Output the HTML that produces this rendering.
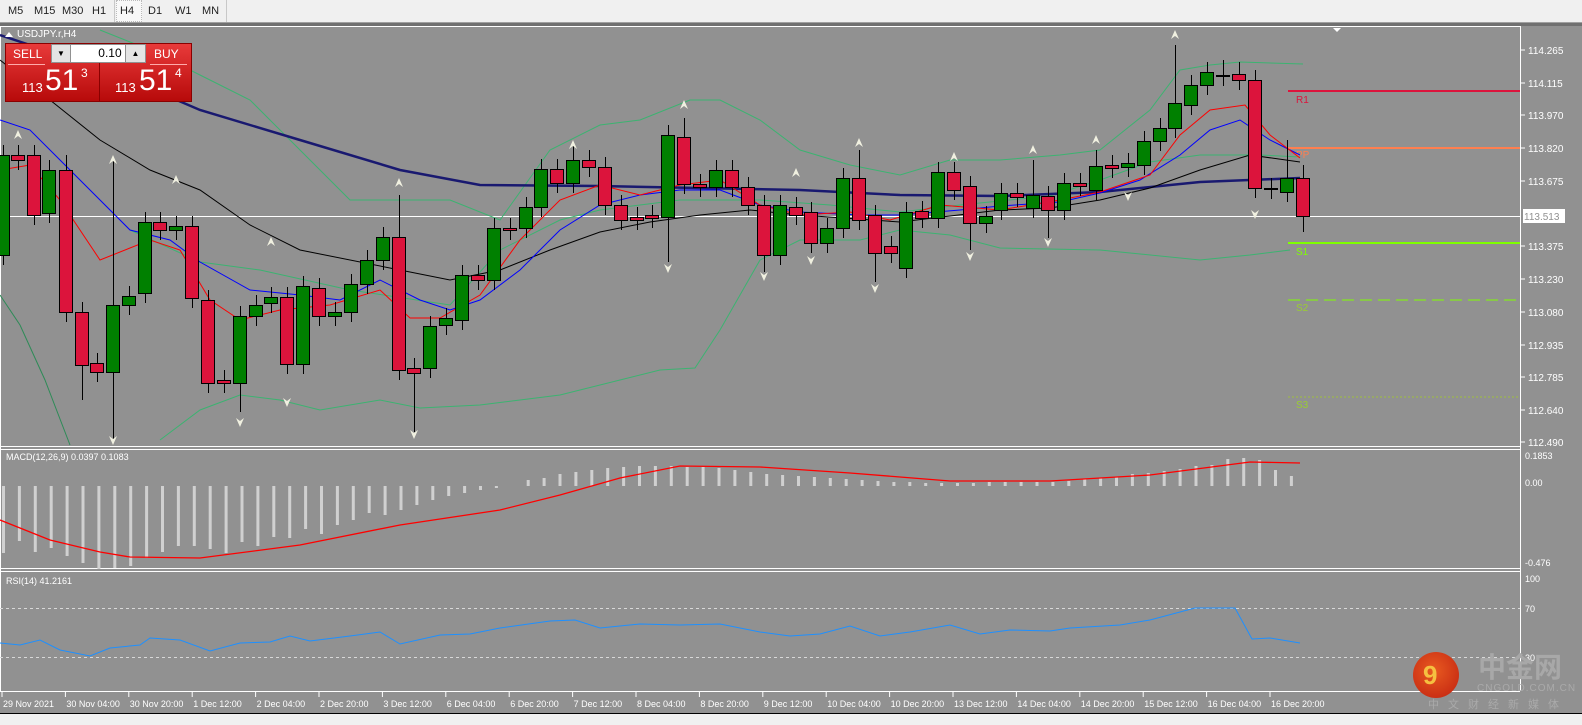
<!DOCTYPE html>
<html><head><meta charset="utf-8"><style>
html,body{margin:0;padding:0;width:1582px;height:724px;overflow:hidden;background:#919191;font-family:"Liberation Sans",sans-serif}
#tb{position:absolute;left:0;top:0;width:1582px;height:22px;background:#f0f0f0;border-bottom:1px solid #a0a0a0}
#tb span{position:absolute;top:5px;font-size:11px;color:#222}
.sep{position:absolute;top:0;width:1px;height:22px;background:#c8c8c8}
#bot{position:absolute;left:0;top:713px;width:1582px;height:11px;background:#f0f0f0;border-top:1px solid #000}
</style></head><body>
<div id="tb">
<span style="left:8px">M5</span><span style="left:34px">M15</span><span style="left:62px">M30</span><span style="left:92px">H1</span>
<div class="sep" style="left:114px"></div>
<div style="position:absolute;left:116px;top:0;width:24px;height:20px;background:#f8f8f8;border:1px dotted #bbb"></div>
<span style="left:120px">H4</span><span style="left:148px">D1</span><span style="left:175px">W1</span><span style="left:202px">MN</span>
<div class="sep" style="left:226px"></div>
</div>
<svg id="s" width="1582" height="724" style="position:absolute;left:0;top:0" xmlns="http://www.w3.org/2000/svg"></svg>
<div style="position:absolute;left:5px;top:43px;width:93px;height:57px;background:linear-gradient(#e83a3a,#b70a0a);border:1px solid #8a0000"></div>
<div style="position:absolute;left:99px;top:43px;width:91px;height:57px;background:linear-gradient(#e83a3a,#b70a0a);border:1px solid #8a0000"></div>
<div style="position:absolute;left:51px;top:44px;width:95px;height:19px;background:#919191"></div>
<div style="position:absolute;left:52px;top:45px;width:18px;height:17px;background:#e4e4e4;font-size:8px;text-align:center;line-height:17px">▼</div>
<div style="position:absolute;left:71px;top:45px;width:54px;height:17px;background:#fff;font-size:12px;text-align:right;line-height:17px">0.10&nbsp;</div>
<div style="position:absolute;left:126px;top:45px;width:19px;height:17px;background:#e4e4e4;font-size:8px;text-align:center;line-height:17px">▲</div>
<div style="position:absolute;left:13px;top:47px;color:#fff;font-size:12px">SELL</div>
<div style="position:absolute;left:8px;top:64px;width:37px;height:1px;background:#ffaaaa"></div>
<div style="position:absolute;left:154px;top:47px;color:#fff;font-size:12px">BUY</div>
<div style="position:absolute;left:150px;top:64px;width:37px;height:1px;background:#ffaaaa"></div>
<div style="position:absolute;left:22px;top:80px;color:#fff;font-size:13px">113</div>
<div style="position:absolute;left:45px;top:64px;color:#fff;font-size:30px">51</div>
<div style="position:absolute;left:81px;top:66px;color:#fff;font-size:12px">3</div>
<div style="position:absolute;left:115px;top:80px;color:#fff;font-size:13px">113</div>
<div style="position:absolute;left:139px;top:64px;color:#fff;font-size:30px">51</div>
<div style="position:absolute;left:175px;top:66px;color:#fff;font-size:12px">4</div>
<div id="bot"></div>
<div style="position:absolute;left:1413px;top:652px;width:46px;height:46px;border-radius:50%;background:radial-gradient(circle at 45% 40%,#e85a20,#c02010)"></div>
<div style="position:absolute;left:1423px;top:660px;font-size:26px;color:#f5c040;font-weight:bold">9</div>
<div style="position:absolute;left:1478px;top:650px;font-size:28px;color:#a8a8a8;font-family:'Noto Sans CJK SC',sans-serif;font-weight:bold;line-height:32px">中金网</div>
<div style="position:absolute;left:1477px;top:683px;font-size:10px;color:#aaa;letter-spacing:1px">CNGOLD.COM.CN</div>
<div style="position:absolute;left:1428px;top:696px;font-size:11px;color:#aaa;letter-spacing:9px;font-family:'Noto Sans CJK SC',sans-serif">中文财经新媒体</div>
<script>
var S=document.getElementById('s'),h='';
function L(x1,y1,x2,y2,c,w,d){h+='<line x1="'+x1+'" y1="'+y1+'" x2="'+x2+'" y2="'+y2+'" stroke="'+c+'" stroke-width="'+(w||1)+'"'+(d?' stroke-dasharray="'+d+'"':'')+'/>';}
function P(pts,c,w){h+='<polyline fill="none" stroke="'+c+'" stroke-width="'+(w||1)+'" points="'+pts.join(' ')+'"/>';}
function T(x,y,t,c,s,a){h+='<text x="'+x+'" y="'+y+'" fill="'+c+'" font-size="'+(s||10)+'" font-family="Liberation Sans,sans-serif"'+(a?' text-anchor="'+a+'"':'')+'>'+t+'</text>';}
h+='<rect x="0" y="23" width="1582" height="3" fill="#707070"/>';
L(0,26.5,1520,26.5,'#fff');L(1520.5,26,1520.5,691,'#fff');
L(0,446.5,1520,446.5,'#fff');L(0,449.5,1520,449.5,'#fff');L(0,568.5,1520,568.5,'#fff');L(0,571.5,1520,571.5,'#fff');L(0,691.5,1520,691.5,'#fff');
L(0.5,26,0.5,691,'#fff');
L(0,216.5,1520,216.5,'#fff');
L(1288,91,1520,91,'#dc143c',2);L(1288,148,1520,148,'#ff7f50',2);L(1288,243,1520,243,'#7fff00',2);
L(1288,300,1520,300,'#7fff00',1,'12,6');L(1288,397,1520,397,'#a0c040',1,'2,2');
T(1296,103,'R1','#dc143c',10);T(1296,158,'PP','#ff7f50',10);T(1296,255,'S1','#7fff00',10);T(1296,311,'S2','#9acd32',10);T(1296,408,'S3','#9acd32',10);
P([0,295,20,325,45,380,70,445],'#2e8b57');
P([100,30,150,50,200,75,250,100,300,150,350,200,400,200,450,200,500,220,550,150,600,125,640,120,690,100,720,100,760,120,800,150,850,165,900,175,950,160,1000,160,1060,155,1100,150,1150,110,1180,70,1210,65,1240,62,1303,64],'#3cb371');
P([160,440,200,410,240,395,280,400,320,410,380,400,420,408,480,405,560,395,620,380,660,370,695,368,720,330,760,260,800,240,860,240,900,230,950,235,1000,248,1100,250,1200,260,1250,255,1290,250],'#3cb371');
P([130,230,200,262,260,270,350,290,450,305,500,250,560,220,600,210,680,200,760,200,830,205,900,212,960,205,1050,196,1100,180,1150,162,1200,155,1260,155,1300,157],'#3cb371');
P([0,35,60,55,130,80,200,110,300,140,400,170,480,185,600,186,800,190,900,195,1000,196,1100,192,1200,182,1300,178],'#191970',2.5);
P([0,60,50,100,100,140,150,170,200,190,250,225,300,250,400,270,450,280,500,270,550,250,600,232,650,222,700,215,750,210,800,215,900,222,1000,210,1050,208,1100,200,1150,188,1200,170,1250,155,1300,162],'#000');
P([0,120,30,130,60,160,100,200,130,230,170,240,200,262,250,290,300,295,340,300,380,280,420,300,450,310,480,300,520,270,560,230,600,205,640,195,680,190,720,190,760,205,800,212,860,215,900,215,960,210,1000,206,1060,202,1100,193,1140,180,1180,155,1210,130,1240,120,1270,140,1300,155],'#0000ff');
P([0,170,30,165,60,200,100,260,150,240,180,250,210,300,240,320,280,310,330,305,380,290,410,318,440,318,480,295,520,240,560,200,600,185,640,195,680,185,720,180,760,205,800,215,850,212,890,220,940,205,1000,210,1060,200,1100,192,1150,175,1180,135,1210,110,1245,105,1270,135,1300,158],'#ff0000');
var C=[[3,155,255,'g'],[18,155,160,'r'],[34,155,215,'r'],[49,170,213,'g'],[66,170,312,'r',155],[82,312,365,'r',0,400],[97,363,372,'r'],[113,305,372,'g',160,440],[129,296,305,'g'],[145,222,293,'g'],[160,222,230,'r'],[176,226,230,'g'],[192,226,298,'r'],[208,300,383,'r'],[224,380,383,'r'],[240,316,383,'g',0,412],[256,305,316,'g'],[271,297,303,'g'],[287,297,364,'r'],[303,286,364,'g'],[319,288,316,'r'],[335,312,316,'g'],[351,284,312,'g'],[367,260,284,'g'],[383,237,260,'g'],[399,237,370,'r',195],[414,368,373,'r',0,432],[430,326,368,'g'],[446,318,325,'g'],[462,275,320,'g'],[478,275,280,'r'],[494,228,280,'g'],[510,228,230,'r'],[526,207,228,'g'],[541,169,207,'g'],[557,169,183,'r'],[573,160,183,'g',145],[589,160,167,'r'],[605,167,205,'r'],[621,205,220,'r'],[637,217,220,'r'],[652,215,218,'r'],[668,135,217,'g',125,262],[684,137,184,'r',118],[700,184,187,'r'],[716,170,187,'g'],[732,170,187,'r'],[748,187,205,'r'],[764,205,255,'r',0,272],[780,205,255,'g'],[796,207,215,'r'],[811,212,243,'r'],[827,228,243,'g'],[843,178,228,'g'],[859,178,220,'r',150],[875,215,253,'r',0,282],[891,246,253,'r'],[906,212,268,'g'],[922,211,218,'r'],[938,172,218,'g'],[954,172,190,'r'],[970,186,223,'r',0,250],[986,216,223,'g'],[1001,193,210,'g'],[1017,193,197,'r'],[1033,195,208,'g',160],[1048,196,210,'r',0,238],[1064,183,210,'g'],[1080,183,186,'r'],[1096,166,190,'g',150],[1112,165,168,'r'],[1128,163,167,'g'],[1144,141,165,'g'],[1160,128,141,'g'],[1175,103,128,'g',45],[1191,85,105,'g'],[1207,72,85,'g'],[1223,75,76,'r',60],[1239,74,80,'r',62],[1255,80,188,'r'],[1271,188,189,'r'],[1287,178,192,'g',140],[1303,178,216,'r',165,232]];
C.forEach(function(c){var x=c[0],t=c[1],b=c[2],hi=c[4]||t-10,lo=c[5]||b+10;
L(x+0.5,hi,x+0.5,lo,'#000');
h+='<rect x="'+(x-6.5)+'" y="'+t+'.5" width="13" height="'+Math.max(1,b-t)+'" fill="'+(c[3]=='g'?'#008000':'#dc143c')+'" stroke="#000"/>';});
[[18,135],[113,160],[176,180],[271,242],[399,183],[573,145],[684,105],[796,173],[859,143],[954,157],[1033,150],[1096,140],[1175,35]].forEach(function(f){h+='<path d="M'+(f[0]-4)+' '+(f[1]+4)+' L'+f[0]+' '+(f[1]-5)+' L'+(f[0]+4)+' '+(f[1]+4)+' L'+f[0]+' '+(f[1]+1)+'Z" fill="#f0f0e0"/>';});
[[113,440],[240,422],[287,402],[414,434],[668,268],[764,276],[811,260],[875,288],[970,256],[1048,242],[1255,214],[1128,196]].forEach(function(f){h+='<path d="M'+(f[0]-4)+' '+(f[1]-4)+' L'+f[0]+' '+(f[1]+5)+' L'+(f[0]+4)+' '+(f[1]-4)+' L'+f[0]+' '+(f[1]-1)+'Z" fill="#f0f0e0"/>';});
h+='<path d="M1333 28 L1341 28 L1337 32Z" fill="#fff"/>';
h+='<path d="M5 37 L9 32 L13 37Z" fill="#fff"/>';T(17,37,'USDJPY.r,H4','#fff',10);
var nb=[553,541,552,548,556,563,569,568,566,558,552,546,546,549,553,542,546,537,538,529,534,525,520,513,515,510,505,500,496,493,490,488];
var pb={33:480,34:478,35:474,36:472,37:470,38:468,39:467,40:466,41:466,42:466,43:467,44:467,45:468,46:470,47:472,48:474,49:475,50:476,51:477,52:478,53:479,54:480,55:481,56:482,57:482,58:483,59:483,60:483,61:483,62:482,63:482,64:482,65:482,66:482,67:481,68:479,69:478,70:477,71:474,72:473,73:471,74:469,75:466,76:465,77:459,78:458,79:460,80:470,81:476};
for(var i=0;i<82;i++){var x=3+i*15.9;if(i<nb.length){h+='<rect x="'+(x-1)+'" y="486" width="3" height="'+(nb[i]-486)+'" fill="#d0d0d0"/>';}else if(pb[i]){h+='<rect x="'+(x-1)+'" y="'+pb[i]+'" width="3" height="'+(486-pb[i])+'" fill="#d0d0d0"/>';}}
P([0,520,50,540,100,552,130,557,200,558,300,545,400,525,500,510,560,495,620,478,680,466,760,467,850,473,950,481,1050,481,1150,475,1250,462,1300,463],'#ff0000',1.3);
T(6,460,'MACD(12,26,9) 0.0397 0.1083','#fff',9);
L(0,608.5,1520,608.5,'#d8d8d8',1,'3,3');L(0,657.5,1520,657.5,'#d8d8d8',1,'3,3');
P([0,643,20,645,40,640,60,650,90,656,110,648,140,645,150,638,180,640,210,651,240,643,270,642,290,636,310,641,350,636,380,632,400,644,440,635,470,634,500,628,550,621,575,620,600,628,640,624,680,625,720,624,760,632,790,636,820,634,850,626,880,636,910,632,950,625,980,634,1010,630,1050,631,1070,628,1120,625,1150,620,1195,608,1235,608,1252,639,1270,638,1300,643],'#1e90ff');
T(6,584,'RSI(14) 41.2161','#fff',9);
[[50,'114.265'],[83,'114.115'],[115,'113.970'],[148,'113.820'],[181,'113.675'],[246,'113.375'],[279,'113.230'],[312,'113.080'],[345,'112.935'],[377,'112.785'],[410,'112.640'],[442,'112.490']].forEach(function(p){L(1521,p[0],1525,p[0],'#fff');T(1528,p[0]+4,p[1],'#fff',10);});
h+='<rect x="1523" y="209" width="42" height="14" fill="#fff"/>';T(1524,220,'113.513','#919191',10);
T(1525,459,'0.1853','#fff',9);T(1525,486,'0.00','#fff',9);T(1525,566,'-0.476','#fff',9);
T(1525,582,'100','#fff',9);T(1525,612,'70','#fff',9);T(1525,661,'30','#fff',9);
var tl=['29 Nov 2021','30 Nov 04:00','30 Nov 20:00','1 Dec 12:00','2 Dec 04:00','2 Dec 20:00','3 Dec 12:00','6 Dec 04:00','6 Dec 20:00','7 Dec 12:00','8 Dec 04:00','8 Dec 20:00','9 Dec 12:00','10 Dec 04:00','10 Dec 20:00','13 Dec 12:00','14 Dec 04:00','14 Dec 20:00','15 Dec 12:00','16 Dec 04:00','16 Dec 20:00'];
tl.forEach(function(t,i){var x=2+i*63.4;L(x,692,x,697,'#fff');T(x+1,707,t,'#fff',9);});
S.innerHTML=h;
</script>
</body></html>
